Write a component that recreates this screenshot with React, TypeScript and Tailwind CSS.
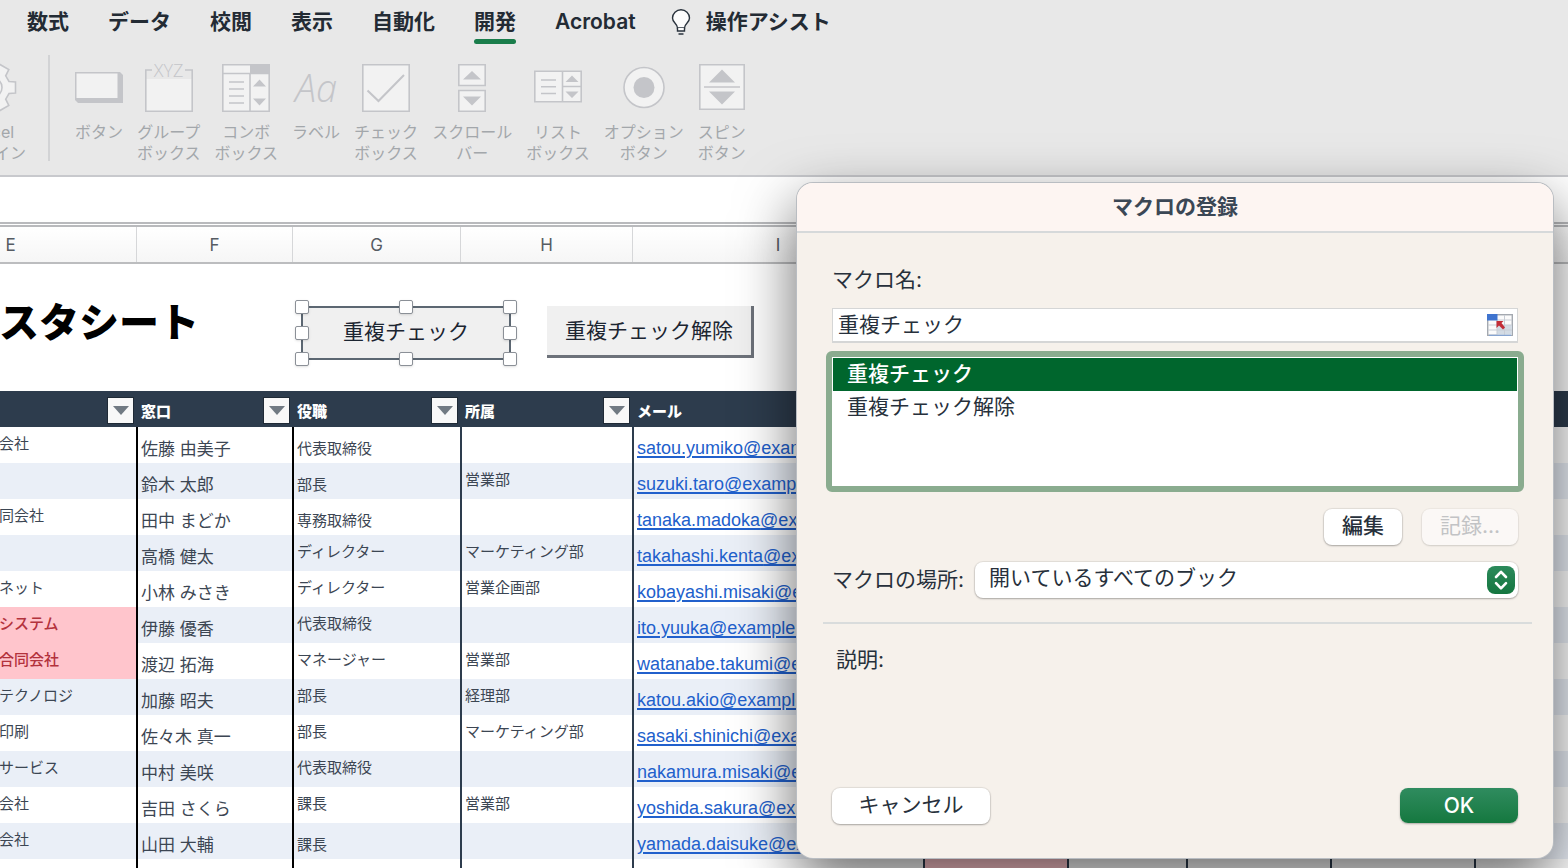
import { useState } from "react";
import type { ReactNode } from "react";

const TABS = ["数式", "データ", "校閲", "表示", "自動化", "開発", "Acrobat"];

const COLUMNS = [
  { name: "E", width: "w-[252px]" },
  { name: "F", width: "w-[156px]" },
  { name: "G", width: "w-[168px]" },
  { name: "H", width: "w-[172px]" },
  { name: "I", width: "w-[291px]" },
  { name: "J", width: "w-[144px]" },
  { name: "K", width: "w-[119px]" },
  { name: "L", width: "w-[144px]" },
  { name: "M", width: "w-[144px]" },
];

type Row = {
  company: string;
  person: string;
  role: string;
  dept: string;
  mail: string;
  duplicate?: boolean;
  low?: boolean;
};

const ROWS: Row[] = [
  { company: "会社", person: "佐藤 由美子", role: "代表取締役", dept: "", mail: "satou.yumiko", low: true },
  { company: "", person: "鈴木 太郎", role: "部長", dept: "営業部", mail: "suzuki.taro", low: true },
  { company: "同会社", person: "田中 まどか", role: "専務取締役", dept: "", mail: "tanaka.madoka", low: true },
  { company: "", person: "高橋 健太", role: "ディレクター", dept: "マーケティング部", mail: "takahashi.kenta" },
  { company: "ネット", person: "小林 みさき", role: "ディレクター", dept: "営業企画部", mail: "kobayashi.misaki" },
  { company: "システム", person: "伊藤 優香", role: "代表取締役", dept: "", mail: "ito.yuuka", duplicate: true },
  { company: "合同会社", person: "渡辺 拓海", role: "マネージャー", dept: "営業部", mail: "watanabe.takumi", duplicate: true },
  { company: "テクノロジ", person: "加藤 昭夫", role: "部長", dept: "経理部", mail: "katou.akio" },
  { company: "印刷", person: "佐々木 真一", role: "部長", dept: "マーケティング部", mail: "sasaki.shinichi" },
  { company: "サービス", person: "中村 美咲", role: "代表取締役", dept: "", mail: "nakamura.misaki" },
  { company: "会社", person: "吉田 さくら", role: "課長", dept: "営業部", mail: "yoshida.sakura" },
  { company: "会社", person: "山田 大輔", role: "課長", dept: "", mail: "yamada.daisuke", low: true },
];

function Icon({ children }: { children: ReactNode }) {
  return (
    <svg viewBox="0 0 48 48" className="size-12 overflow-visible" fill="#f2f2f2" stroke="#c4c5c9" strokeWidth="1.6" aria-hidden="true">
      {children}
    </svg>
  );
}

const TOOLS: { label: string[]; icon: ReactNode }[] = [
  {
    label: ["ボタン"],
    icon: (
      <Icon>
        <path d="M0 8H45L48 11V39H3L0 36Z" fill="#c4c5c9" stroke="none" />
        <rect x="1.500" y="9.500" width="41" height="24.500" stroke="none" />
      </Icon>
    ),
  },
  {
    label: ["グループ", "ボックス"],
    icon: (
      <Icon>
        <rect x="1" y="15" width="46" height="32" stroke="none" />
        <path d="M7 6H.8V47.200H47.200V6H40" fill="none" />
        <text x="23.500" y="13" textAnchor="middle" fill="#c4c5c9" stroke="none" className="font-['Open_Sans'] text-[18px] font-light">
          XYZ
        </text>
      </Icon>
    ),
  },
  {
    label: ["コンボ", "ボックス"],
    icon: (
      <Icon>
        <path d="M.8.8H47.200V47.200H.8Z" />
        <path d="M28 0H48V10H28Z" fill="#c4c5c9" stroke="none" />
        <path d="M0 9.500H48M28 9V47" />
        <path d="M7 18H22M7 25H22M7 32H22M7 39H22" />
        <path d="M31 22.500L37.500 15.500L44 22.500ZM31 34.500L37.500 41.500L44 34.500Z" fill="#c4c5c9" stroke="none" />
      </Icon>
    ),
  },
  {
    label: ["ラベル"],
    icon: (
      <Icon>
        <text x="24" y="38" textAnchor="middle" fill="#c4c5c9" stroke="none" className="font-['Open_Sans'] text-[38px] font-light italic">
          Aa
        </text>
      </Icon>
    ),
  },
  {
    label: ["チェック", "ボックス"],
    icon: (
      <Icon>
        <path d="M.8.8H47.200V47.200H.8Z" />
        <path d="M5.500 26.500L16.500 37L42 11" fill="none" strokeWidth="2" />
      </Icon>
    ),
  },
  {
    label: ["スクロール", "バー"],
    icon: (
      <Icon>
        <path d="M10.800.8H37.200V21.500H10.800ZM10.800 26.500H37.200V47.200H10.800Z" />
        <path d="M15 15.500L24 7L33 15.500ZM15 32.500L24 41.500L33 32.500Z" fill="#c4c5c9" stroke="none" />
      </Icon>
    ),
  },
  {
    label: ["リスト", "ボックス"],
    icon: (
      <Icon>
        <path d="M.8 7.300H47.200V37.800H.8Z" />
        <path d="M28.500 7V38M28.500 22.500H47" />
        <path d="M7 16H22M7 22.700H22M7 29.500H22" />
        <path d="M31.500 18L38 11.500L44.500 18ZM31.500 27.500L38 34L44.500 27.500Z" fill="#c4c5c9" stroke="none" />
      </Icon>
    ),
  },
  {
    label: ["オプション", "ボタン"],
    icon: (
      <Icon>
        <circle cx="24" cy="23.500" r="20" />
        <circle cx="24" cy="23.500" r="10.500" fill="#c4c5c9" stroke="none" />
      </Icon>
    ),
  },
  {
    label: ["スピン", "ボタン"],
    icon: (
      <Icon>
        <path d="M1.800.8H46.200V45.200H1.800Z" />
        <path d="M6 23H42" />
        <path d="M11 18.500L24 5.500L37 18.500ZM11 27.500L24 40.500L37 27.500Z" fill="#c4c5c9" stroke="none" />
      </Icon>
    ),
  },
];

function Tool({ label, icon }: { label: string[]; icon: ReactNode }) {
  return (
    <button disabled className="flex shrink-0 flex-col items-center gap-[10px] text-base leading-[21px] text-[#a3a7ab]">
      {icon}
      <span className="flex flex-col whitespace-nowrap">
        {label.map((line) => (
          <span key={line}>{line}</span>
        ))}
      </span>
    </button>
  );
}

function Ribbon() {
  return (
    <header className="h-[177px] border-b-2 border-[#c8c9cd] bg-[#e8e8e8]">
      <nav className="flex items-start gap-[39px] pl-[27px] text-[21px] font-semibold leading-[44px] text-[#232b34]">
        {TABS.map((tab) => (
          <a
            key={tab}
            href="#"
            className={tab === "開発" ? "flex flex-col after:-mt-[5px] after:h-[5px] after:rounded-full after:bg-[#1a7d4b]" : ""}
          >
            {tab}
          </a>
        ))}
        <button className="-ml-1 flex items-center gap-[15px]">
          <svg viewBox="0 0 20 26" className="h-[26px] w-5" fill="#fcfcfc" stroke="#29323c" strokeWidth="1.4" aria-hidden="true">
            <path d="M6.500 19C6.500 14.500 1.500 14 1.500 9A8.500 8.300 0 0 1 18.500 9C18.500 14 13.500 14.500 13.500 19Z" />
            <path d="M6.500 19V22H13.500V19M7.500 25H12.500" />
          </svg>
          操作アシスト
        </button>
      </nav>
      <div className="flex pt-[11px]">
        <div className="-ml-[38px] pt-[9px]">
          <Tool
            label={["Excel", "アドイン"]}
            icon={
              <Icon>
                <g transform="translate(22 23.500)">
                  <path d="M17 -6L23.500 -5.500V5.500L17 6L13.700 11.700L16.800 18L7.200 23.500L3.300 17.700H-3.300L-7.200 23.500L-16.800 18L-13.700 11.700L-17 6L-23.500 5.500V-5.500L-17 -6L-13.700 -11.700L-16.800 -18L-7.200 -23.500L-3.300 -17.700H3.300L7.200 -23.500L16.800 -18L13.700 -11.700Z" />
                  <circle r="10" />
                </g>
              </Icon>
            }
          />
        </div>
        <div className="ml-[22px] h-[106px] border-l-2 border-[#d2d3d5]" />
        <div className="ml-[25px] flex items-start gap-[14px] pt-[9px]">
          {TOOLS.map((tool) => (
            <Tool key={tool.label.join("")} {...tool} />
          ))}
        </div>
      </div>
    </header>
  );
}

const HANDLES = [
  "-left-2 -top-2",
  "left-1/2 -ml-[7px] -top-2",
  "-right-2 -top-2",
  "-left-2 top-1/2 -mt-[7px]",
  "-right-2 top-1/2 -mt-[7px]",
  "-left-2 -bottom-2",
  "left-1/2 -ml-[7px] -bottom-2",
  "-right-2 -bottom-2",
];

function SheetTop() {
  return (
    <div className="flex h-[127px] items-start pt-[42px]">
      <h1 className="-ml-[41px] -mt-2 w-[342px] shrink-0 whitespace-nowrap text-[40px] font-black leading-[50px] text-black">マスタシート</h1>
      <button className="relative h-[54px] w-[210px] shrink-0 border-2 border-[#5c6772] bg-[#f0f0f0] pb-0.5 text-[21px] text-[#1c2531]">
        重複チェック
        {HANDLES.map((pos) => (
          <span key={pos} className={`absolute size-[14px] rounded-xs border border-[#8b9097] bg-white shadow-sm ${pos}`} />
        ))}
      </button>
      <button className="ml-9 h-[52px] w-[207px] shrink-0 border-b-[3px] border-r-[3px] border-[#6d727a] bg-[#f0f0f0] text-[21px] text-[#1c2531]">
        重複チェック解除
      </button>
    </div>
  );
}

function HeaderCell({ title, filter = true }: { title: string; filter?: boolean }) {
  return (
    <th className="h-9 border-l-2 border-[#2d3c4d] p-0">
      <div className="flex items-center justify-between pl-[3px] pr-0.5">
        <span className="pt-1.5 text-[15px] font-black">{title}</span>
        {filter && (
          <button aria-label="フィルター" className="mt-[3px] flex size-[27px] items-center justify-center border border-[#1f2a36] bg-[#f8f8f8]">
            <span className="border-x-8 border-t-[9px] border-x-transparent border-t-[#717a83]" />
          </button>
        )}
      </div>
    </th>
  );
}

function Sheet() {
  return (
    <main>
      <div className="h-[45px] bg-white" />
      <div className="h-[5px] border-y-2 border-[#b9babd] bg-white" />
      <div className="flex h-[37px] border-b-2 border-[#bcbdbf] bg-linear-to-b from-white to-[#f6f6f6] font-[Inter] text-[17px] leading-9 text-[#565c63]">
        {COLUMNS.map((col) => (
          <div key={col.name} className={`shrink-0 border-r border-[#d6d7d9] text-center first:-ml-[115px] ${col.width}`}>
            {col.name}
          </div>
        ))}
      </div>
      <SheetTop />
      <div className="-ml-[116px]">
        <table className="w-full table-fixed border-separate border-spacing-0 text-[15px] text-[#3c4653]">
          <colgroup>
            {COLUMNS.map((col) => (
              <col key={col.name} className={col.width} />
            ))}
            <col />
          </colgroup>
          <thead className="bg-[#2d3c4d] text-left text-white">
            <tr>
              <HeaderCell title="" />
              <HeaderCell title="窓口" />
              <HeaderCell title="役職" />
              <HeaderCell title="所属" />
              <HeaderCell title="メール" filter={false} />
              <th colSpan={5} />
            </tr>
          </thead>
          <tbody>
            {ROWS.map((row) => (
              <tr key={row.mail} className="even:bg-[#eaeff7]">
                <td className={`h-9 p-0 pl-[115px] align-top leading-[34px] ${row.duplicate ? "bg-[#ffc5cc] font-medium text-[#b3323c]" : ""}`}>
                  {row.company}
                </td>
                <td className="border-l-2 border-black p-0 pl-[3px] align-bottom text-[17px] leading-7">{row.person}</td>
                <td className={`border-l-2 border-black p-0 pl-[3px] ${row.low ? "align-bottom leading-7" : "align-top leading-[34px]"}`}>{row.role}</td>
                <td className="border-l-2 border-[#2d3c4d] p-0 pl-[3px] align-top leading-[34px]">{row.dept}</td>
                <td className="overflow-hidden whitespace-nowrap border-l-2 border-[#2d3c4d] p-0 pl-[3px] align-bottom font-['Liberation_Sans'] text-[18px] leading-[30px]">
                  <a href="#" className="text-[#2160cc] underline decoration-2 underline-offset-2">
                    {row.mail}@example.com
                  </a>
                </td>
                <td colSpan={5} />
              </tr>
            ))}
            <tr>
              <td className="h-9" />
              <td className="border-l-2 border-black" />
              <td className="border-l-2 border-black" />
              <td className="border-l-2 border-[#2d3c4d]" />
              <td className="border-l-2 border-[#2d3c4d]" />
              <td className="border-l-2 border-[#2d3c4d] bg-[#ffc5cc]" />
              <td className="border-l-2 border-[#2d3c4d]" />
              <td className="border-l-2 border-[#2d3c4d]" />
              <td className="border-l-2 border-[#2d3c4d]" />
              <td className="border-l-2 border-[#2d3c4d]" />
            </tr>
          </tbody>
        </table>
      </div>
    </main>
  );
}

const MACROS = ["重複チェック", "重複チェック解除"];

function MacroDialog() {
  const [name, setName] = useState(MACROS[0]);

  return (
    <div
      role="dialog"
      aria-labelledby="dialog-title"
      className="absolute right-[15px] top-[183px] flex h-[675px] w-[756px] flex-col overflow-hidden rounded-2xl bg-[#f6f1eb] text-[21px] leading-[30px] text-[#27303b] shadow-[0_0_0_1px_#b9bdc2,0_22px_60px_rgba(0,0,0,0.6)]"
    >
      <h2 id="dialog-title" className="h-[50px] shrink-0 border-b-2 border-[#d6d9da] bg-[#fdf5f2] text-center font-bold leading-[48px] text-[#3b4755]">
        マクロの登録
      </h2>
      <div className="flex grow flex-col px-[35px] pb-[34px] pt-8">
        <label htmlFor="macro-name">マクロ名:</label>
        <div className="mt-[13px] flex h-[35px] items-center border border-b-2 border-[#d5d6d6] bg-white pr-1">
          <input id="macro-name" value={name} onChange={(e) => setName(e.target.value)} className="h-full grow px-[5px] pb-1 outline-none" />
          <button aria-label="範囲を選択">
            <svg viewBox="0 0 26 22" className="h-[22px] w-[26px]" aria-hidden="true">
              <rect x=".7" y=".7" width="24.600" height="20.600" fill="#fbfbfb" stroke="#a4a9b0" strokeWidth="1.400" />
              <path d="M10 11H25V21H10Z" fill="#d3dbe4" />
              <path d="M1 11H25M1 16H25M9.500 6H25M10 6V21M17.500 1V21" stroke="#c8cdd5" />
              <path d="M0 0H10.500V6.500H0Z" fill="#3f74cf" />
              <path d="M2 21.300H24" stroke="#7fa3da" />
              <path d="M9.500 7H16.500L14.500 9L18 13.500L16 15.500L12 11.500L9.500 14Z" fill="#c22d37" />
            </svg>
          </button>
        </div>
        <div
          role="listbox"
          aria-label="マクロ名"
          className="-mx-[6px] mt-2 flex h-[141px] shrink-0 flex-col rounded-md border-6 border-[#8aac8f] bg-white p-px"
        >
          {MACROS.map((macro) => (
            <button
              key={macro}
              role="option"
              aria-selected={macro === name}
              onClick={() => setName(macro)}
              className="h-[33px] pb-px pl-[14px] text-left aria-selected:bg-[#00662d] aria-selected:font-medium aria-selected:text-white"
            >
              {macro}
            </button>
          ))}
        </div>
        <div className="mt-[17px] flex justify-end gap-5">
          <button className="h-9 w-[78px] rounded-lg bg-white pb-0.5 font-medium shadow-[0_0_1px_1px_rgba(0,0,0,0.08),0_1px_2px_rgba(0,0,0,0.25)]">編集</button>
          <button disabled className="h-9 w-[96px] rounded-lg bg-[#fbf8f6] pb-0.5 text-[#c2c3c5] shadow-[0_0_1px_1px_rgba(0,0,0,0.04),0_1px_2px_rgba(0,0,0,0.12)]">
            記録...
          </button>
        </div>
        <div className="mt-[17px] flex items-center gap-[11px]">
          <label htmlFor="macro-place" className="shrink-0">
            マクロの場所:
          </label>
          <div className="relative grow">
            <select
              id="macro-place"
              className="block h-9 w-full appearance-none rounded-lg bg-white pb-1 pl-[14px] shadow-[0_0_1px_1px_rgba(0,0,0,0.08),0_1px_2px_rgba(0,0,0,0.25)]"
            >
              <option>開いているすべてのブック</option>
            </select>
            <span className="pointer-events-none absolute right-[3px] top-1 flex size-7 items-center justify-center rounded-lg bg-linear-to-b from-[#2b8a5b] to-[#14763f] text-white">
              <svg viewBox="0 0 28 28" className="size-7" fill="none" stroke="currentColor" strokeWidth="2.6" strokeLinecap="round" strokeLinejoin="round" aria-hidden="true">
                <path d="M9 11L14 5.800L19 11M9 17.200L14 22.400L19 17.200" />
              </svg>
            </span>
          </div>
        </div>
        <hr className="-ml-[9px] -mr-[14px] mt-6 border-t-2 border-[#d9dcdc]" />
        <p className="mt-[21px] pl-1">説明:</p>
        <div className="mt-auto flex justify-between">
          <button className="h-9 w-[158px] rounded-lg bg-white pb-0.5 shadow-[0_0_1px_1px_rgba(0,0,0,0.08),0_1px_2px_rgba(0,0,0,0.25)]">キャンセル</button>
          <button className="h-[35px] w-[118px] rounded-lg bg-linear-to-b from-[#2f8c5f] to-[#14783f] font-[Inter] font-medium text-white shadow-[0_1px_2px_rgba(0,0,0,0.3)]">
            OK
          </button>
        </div>
      </div>
    </div>
  );
}

export default function App() {
  return (
    <div lang="ja" className="relative h-screen overflow-hidden bg-white font-[Inter,'Noto_Sans_CJK_JP',sans-serif]">
      <Ribbon />
      <Sheet />
      <MacroDialog />
    </div>
  );
}
